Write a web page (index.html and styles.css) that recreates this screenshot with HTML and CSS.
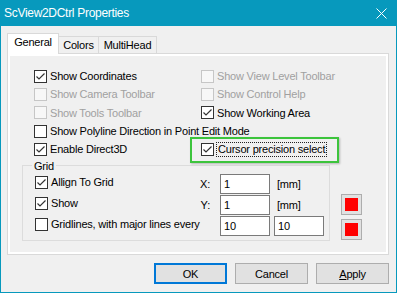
FILE: index.html
```html
<!DOCTYPE html>
<html>
<head>
    <meta charset="UTF-8">
    <title>ScView2DCtrl Properties</title>
    <link rel="stylesheet" href="styles.css">
</head>
<body>
    <div class="window">
        <div class="titlebar">
            <span class="title">ScView2DCtrl Properties</span>
            <svg class="close" width="11" height="11" viewBox="0 0 11 11"><path d="M0.5 0.5L10.5 10.5M10.5 0.5L0.5 10.5" stroke="#fff" stroke-width="1" fill="none"/></svg>
        </div>
        <div class="body">
            <div class="tabs">
                <div class="tab active">General</div>
                <div class="tab colors">Colors</div>
                <div class="tab multi">MultiHead</div>
            </div>
            <div class="panel">
                <!-- 选项 -->
                <div class="options">
                    <label class="check"><span class="box"><svg viewBox="0 0 11 11"><polyline points="1.5,5.5 4,8 9.5,2.5"/></svg></span>Show Coordinates</label>
                    <label class="check off"><span class="box"></span>Show View Level Toolbar</label>
                    <label class="check off"><span class="box"></span>Show Camera Toolbar</label>
                    <label class="check off"><span class="box"></span>Show Control Help</label>
                    <label class="check off"><span class="box"></span>Show Tools Toolbar</label>
                    <label class="check"><span class="box"><svg viewBox="0 0 11 11"><polyline points="1.5,5.5 4,8 9.5,2.5"/></svg></span>Show Working Area</label>
                    <label class="check wide"><span class="box"></span>Show Polyline Direction in Point Edit Mode</label>
                    <label class="check"><span class="box"><svg viewBox="0 0 11 11"><polyline points="1.5,5.5 4,8 9.5,2.5"/></svg></span>Enable Direct3D</label>
                    <label class="check marked"><span class="box"><svg viewBox="0 0 11 11"><polyline points="1.5,5.5 4,8 9.5,2.5"/></svg></span><span class="focus">Cursor precision select</span><span class="highlight"></span></label>
                </div>
                <!-- 网格 -->
                <div class="lower">
                    <fieldset class="group">
                        <legend>Grid</legend>
                        <div class="grid-rows">
                            <label class="check"><span class="box"><svg viewBox="0 0 11 11"><polyline points="1.5,5.5 4,8 9.5,2.5"/></svg></span>Allign To Grid</label>
                            <span class="axis">X:</span>
                            <input class="field" type="text" value="1">
                            <span class="unit">[mm]</span>

                            <label class="check"><span class="box"><svg viewBox="0 0 11 11"><polyline points="1.5,5.5 4,8 9.5,2.5"/></svg></span>Show</label>
                            <span class="axis">Y:</span>
                            <input class="field" type="text" value="1">
                            <span class="unit">[mm]</span>

                            <label class="check"><span class="box"></span>Gridlines, with major lines every</label>
                            <span class="axis"></span>
                            <input class="field" type="text" value="10">
                            <input class="field second" type="text" value="10">
                        </div>
                    </fieldset>
                    <div class="swatches">
                        <button class="swatch"><span></span></button>
                        <button class="swatch"><span></span></button>
                    </div>
                </div>
            </div>
            <div class="buttons">
                <button class="btn default">OK</button>
                <button class="btn">Cancel</button>
                <button class="btn"><u>A</u>pply</button>
            </div>
        </div>
    </div>
</body>
</html>
```
FILE: styles.css
```css
* {
    margin: 0;
    padding: 0;
    box-sizing: border-box;
}
body {
    background-color: #f0f0f0;
    font-family: "Liberation Sans", Arial, sans-serif;
    font-size: 11px;
    letter-spacing: -0.2px;
    color: #000;
}
.window {
    width: 397px;
    height: 293px;
    border: 1px solid #0799bd;
    border-top: none;
    background-color: #f0f0f0;
}
.titlebar {
    height: 26px;
    display: flex;
    align-items: center;
    justify-content: space-between;
    padding: 0 9px 0 3px;
    background-color: #0799bd;
    color: #fff;
}
.title {
    font-size: 12px;
    letter-spacing: -0.3px;
}
.body {
    padding: 7px 7px 0 6px;
}

/* 选项卡 */
.tabs {
    display: flex;
    align-items: flex-end;
    height: 20px;
}
.tab {
    height: 17px;
    margin-left: -1px;
    border: 1px solid #d9d9d9;
    border-bottom: none;
    background-color: #f0f0f0;
    text-align: center;
    line-height: 16px;
}
.tab.active {
    position: relative;
    z-index: 1;
    width: 52px;
    height: 21px;
    margin-left: 0;
    margin-bottom: -1px;
    background-color: #fff;
    line-height: 17px;
}
.colors {
    width: 41px;
}
.multi {
    width: 59px;
}
.panel {
    width: 382px;
    height: 202px;
    padding: 13px 0 0 14px;
    border: 1px solid #d9d9d9;
    box-shadow: inset 0 0 0 2px #fff;
}

/* 复选框 */
.options {
    display: grid;
    grid-template-columns: 167px auto;
    grid-auto-rows: 18.3px;
    padding-left: 12px;
}
.check {
    display: flex;
    align-items: center;
    white-space: nowrap;
}
.check.wide {
    grid-column: 1 / -1;
}
.check.off {
    color: #a0a0a0;
}
.box {
    width: 13px;
    height: 13px;
    margin-right: 3px;
    flex-shrink: 0;
    border: 1px solid #333;
    background-color: #fff;
}
.box svg {
    display: block;
    width: 11px;
    height: 11px;
    fill: none;
    stroke: #333;
    stroke-width: 1.2;
}
.off .box {
    border-color: #c6c6c6;
    background-color: #f7f7f7;
}
.marked {
    position: relative;
}
.focus {
    padding: 0 1px;
    line-height: 13px;
    outline: 1px dotted #222;
}
.highlight {
    position: absolute;
    left: -11px;
    top: -3px;
    bottom: -5px;
    width: 149px;
    border: 2px solid #3cc43c;
    box-shadow: 1px 1px 2px rgba(0, 0, 0, .25);
}

/* 网格 */
.lower {
    display: flex;
    align-items: flex-end;
}
.group {
    width: 308px;
    margin-top: 1.5px;
    padding: 2px 0 4px 12px;
    border: 1px solid #dcdcdc;
    min-width: 0;
}
.group legend {
    margin-left: -3px;
    padding: 0 2px;
    line-height: 12px;
}
.grid-rows {
    display: grid;
    grid-template-columns: 163px 22px 50px 54px;
    grid-auto-rows: 20px;
    row-gap: 1px;
    align-items: center;
}
.grid-rows .check {
    margin-bottom: 3px;
}
.axis {
    padding-right: 10px;
    text-align: right;
}
.field {
    width: 50px;
    height: 20px;
    padding-left: 3px;
    border: 1px solid #7a7a7a;
    background-color: #fff;
    font-family: inherit;
    font-size: 11px;
    letter-spacing: inherit;
    color: #000;
    outline: none;
}
.field.second {
    margin-left: 4px;
}
.unit {
    padding-left: 7px;
}
.swatches {
    display: flex;
    flex-direction: column;
    gap: 4px;
    margin: 0 0 1px 11px;
}
.swatch {
    display: flex;
    align-items: center;
    justify-content: center;
    width: 21px;
    height: 21px;
    border: 1px solid #adadad;
    background-color: #e1e1e1;
}
.swatch span {
    width: 13px;
    height: 13px;
    background-color: #f00;
}

/* 按钮 */
.buttons {
    display: flex;
    justify-content: flex-end;
    gap: 8px;
    margin-top: 8px;
}
.btn {
    width: 73px;
    height: 21px;
    border: 1px solid #adadad;
    background-color: #e1e1e1;
    font-family: inherit;
    font-size: 11px;
    letter-spacing: inherit;
    color: #000;
}
.btn.default {
    border: 2px solid #0078d7;
}
```
